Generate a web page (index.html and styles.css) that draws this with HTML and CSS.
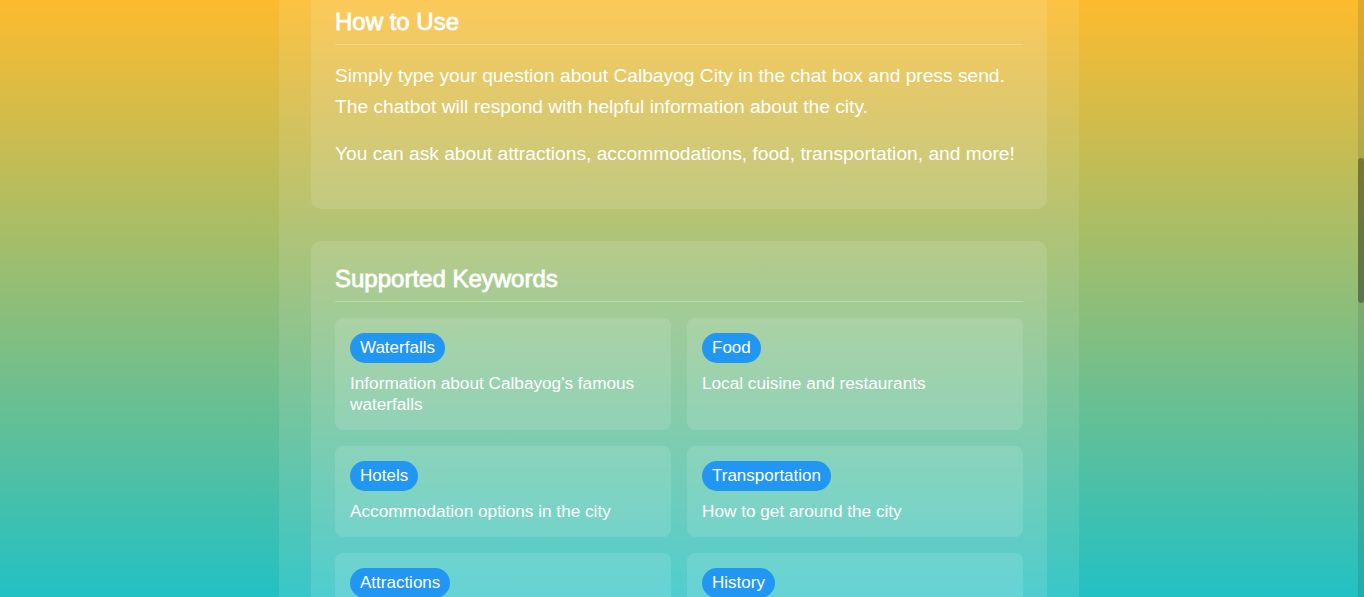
FILE: index.html
```html
<!DOCTYPE html>
<html lang="en">
<head>
<meta charset="utf-8">
<title>Calbayog City Chatbot</title>
<link rel="stylesheet" href="styles.css">
</head>
<body class="page">
  <div class="viewport">
    <main class="column">
      <div class="stack">
        <section class="card">
          <h2 class="card-title">How to Use</h2>
          <p class="card-text">Simply type your question about Calbayog City in the chat box and press send. The chatbot will respond with helpful information about the city.</p>
          <p class="card-text">You can ask about attractions, accommodations, food, transportation, and more!</p>
        </section>
        <section class="card">
          <h2 class="card-title">Supported Keywords</h2>
          <div class="keyword-grid">
            <div class="keyword">
              <span class="badge">Waterfalls</span>
              <p class="keyword-desc">Information about Calbayog's famous waterfalls</p>
            </div>
            <div class="keyword">
              <span class="badge">Food</span>
              <p class="keyword-desc">Local cuisine and restaurants</p>
            </div>
            <div class="keyword">
              <span class="badge">Hotels</span>
              <p class="keyword-desc">Accommodation options in the city</p>
            </div>
            <div class="keyword">
              <span class="badge">Transportation</span>
              <p class="keyword-desc">How to get around the city</p>
            </div>
            <div class="keyword">
              <span class="badge">Attractions</span>
              <p class="keyword-desc">Popular tourist spots and landmarks</p>
            </div>
            <div class="keyword">
              <span class="badge">History</span>
              <p class="keyword-desc">The rich history of Calbayog City</p>
            </div>
          </div>
        </section>
      </div>
    </main>
  </div>
  <div class="scrollbar"><div class="scrollbar-thumb"></div></div>
</body>
</html>
```
FILE: styles.css
```css
html, body {
  margin: 0;
  padding: 0;
}

.page {
  display: flex;
  height: 100vh;
  overflow: hidden;
  background: linear-gradient(to bottom, #fdbb2d 0%, #22c1c3 100%);
  font-family: "Liberation Sans", Arial, sans-serif;
  color: #ffffff;
}

.viewport {
  flex: 1;
  display: flex;
  justify-content: center;
  overflow: hidden;
}

.column {
  width: 800px;
  box-sizing: border-box;
  padding: 0 32px;
  background: rgba(255, 255, 255, 0.1);
}

.stack {
  margin-top: -16px;
  display: flex;
  flex-direction: column;
  gap: 32px;
}

.card {
  background: rgba(255, 255, 255, 0.12);
  border-radius: 10px;
  padding: 24px;
}

.card-title {
  margin: 0 0 15px;
  padding-bottom: 9px;
  font-size: 24px;
  line-height: 27px;
  font-weight: 400;
  -webkit-text-stroke: 0.8px #ffffff;
  border-bottom: 1px solid rgba(255, 255, 255, 0.25);
}

.card-text {
  margin: 0 0 16px;
  font-size: 19.2px;
  line-height: 31px;
}

.keyword-grid {
  padding-top: 1px;
  display: grid;
  grid-template-columns: 1fr 1fr;
  gap: 16px;
}

.keyword {
  background: rgba(255, 255, 255, 0.12);
  border-radius: 8px;
  padding: 15px;
}

.badge {
  display: inline-block;
  background: #2196f3;
  color: #ffffff;
  font-size: 17px;
  line-height: 20px;
  padding: 5px 10px;
  border-radius: 15px;
}

.keyword-desc {
  margin: 10px 0 0;
  font-size: 17.2px;
  line-height: 21px;
}

.scrollbar {
  width: 6px;
  flex: none;
  background: rgba(0, 0, 0, 0.1);
}

.scrollbar-thumb {
  margin-top: 158px;
  height: 145px;
  border-radius: 3px;
  background: rgba(0, 0, 0, 0.3);
}
```
